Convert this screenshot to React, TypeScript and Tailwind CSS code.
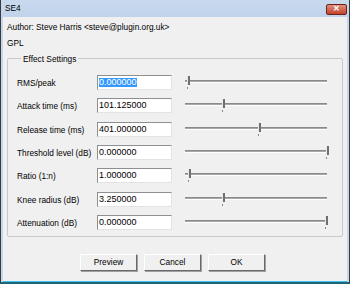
import React from "react";

const ROWS = [
  { label: "RMS/peak", value: "0.000000", pos: 2, selected: true },
  { label: "Attack time (ms)", value: "101.125000", pos: 37 },
  { label: "Release time (ms)", value: "401.000000", pos: 73 },
  { label: "Threshold level (dB)", value: "0.000000", pos: 141 },
  { label: "Ratio (1:n)", value: "1.000000", pos: 3 },
  { label: "Knee radius (dB)", value: "3.250000", pos: 37 },
  { label: "Attenuation (dB)", value: "0.000000", pos: 140 },
];

function Slider({ pos }: { pos: number }) {
  return (
    <div className="relative h-[20px] w-[142px]">
      <div className="absolute left-0 right-0 top-[6px] h-[1px] bg-[#8a8a8a]" />
      <div className="absolute left-0 right-0 top-[7px] h-[1px] bg-[#a8a8a8]" />
      <div className="absolute left-0 right-0 top-[8px] h-[1px] bg-white" />
      <div className="absolute top-[2px] h-[9px] w-[3px] border-l border-[#e8e8e8] bg-[#6f6f6f]" style={{ left: pos }} />
      <div className="absolute top-[13px] h-[2px] w-[1px] bg-[#8a8a8a]" style={{ left: pos }} />
    </div>
  );
}

function Btn({ children }: { children: React.ReactNode }) {
  return (
    <div className="flex h-[17px] w-[57px] items-center justify-center border border-t-white border-l-white border-b-[#696969] border-r-[#696969] bg-[#f0f0f0] shadow-[1px_1px_0_#a0a0a0]">
      {children}
    </div>
  );
}

export default function App() {
  return (
    <div
      className="flex h-[284px] w-[350px] flex-col border-x border-b-2 border-x-[#3a3a3a] border-b-[#1f6579] bg-[#c5d7ec] text-[8.3px] leading-none whitespace-nowrap text-black"
      style={{ fontFamily: "'Liberation Sans', Arial, sans-serif" }}
    >
      <div className="flex h-[17px] items-center justify-between bg-gradient-to-b from-[#c9daee] to-[#bfd3ea] pl-[4px] pr-[2px]">
        <span>SE4</span>
        <div className="mt-[1px] flex h-[11px] w-[21px] items-center justify-center rounded-[2px] border border-[#6e2218] bg-gradient-to-b from-[#e08e7e] to-[#c0402a] text-[8px] font-bold text-white">
          ✕
        </div>
      </div>
      <div className="mx-[2px] flex flex-1 flex-col border-b border-[#3fc3ea] bg-[#f0f0f0] px-[4px]">
        <div className="pt-[6px]">Author: Steve Harris &lt;steve@plugin.org.uk&gt;</div>
        <div className="pt-[8px]">GPL</div>
        <fieldset className="mt-[7px] h-[182px] rounded-[2px] border border-[#c9c9c9] pl-[9px]">
          <legend className="ml-[4px] px-[2px]">Effect Settings</legend>
          <div className="flex flex-col pt-[12px]">
            {ROWS.map((r) => (
              <div key={r.label} className="flex h-[23.4px] items-start">
                <div className="w-[80px] pt-[4px]">{r.label}</div>
                <div className="flex h-[15px] w-[75px] items-center border border-t-[#8e8f8f] border-l-[#8e8f8f] border-b-[#e3e3e3] border-r-[#e3e3e3] bg-white pl-[1px] text-[9px]">
                  <span className={r.selected ? "bg-[#3399ff] text-white" : ""}>{r.value}</span>
                </div>
                <div className="ml-[13px] mt-[-1px]">
                  <Slider pos={r.pos} />
                </div>
              </div>
            ))}
          </div>
        </fieldset>
        <div className="mt-[17px] flex gap-[7px] pl-[73px]">
          <Btn>Preview</Btn>
          <Btn>Cancel</Btn>
          <Btn>OK</Btn>
        </div>
      </div>
    </div>
  );
}
